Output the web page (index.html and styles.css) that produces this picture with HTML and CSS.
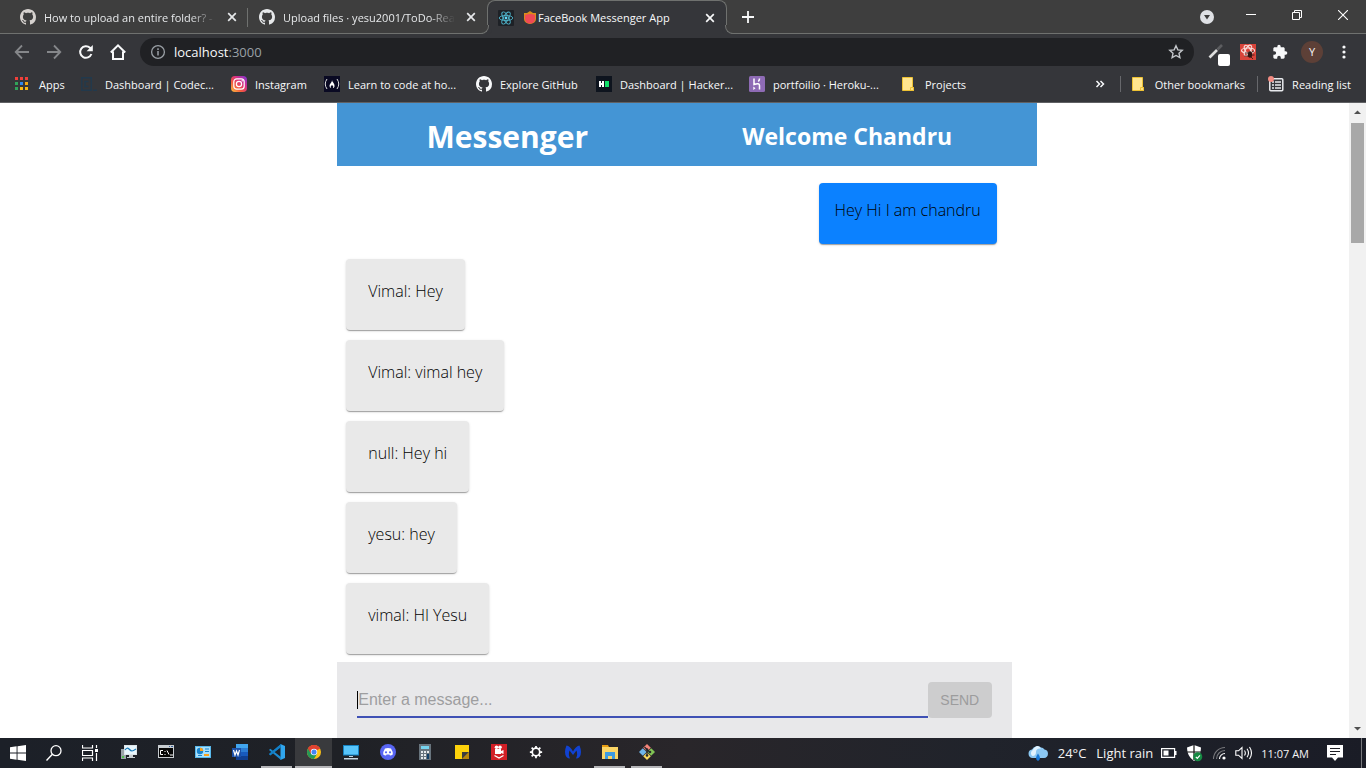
FILE: index.html
```html
<!DOCTYPE html>
<html lang="en">
<head>
<meta charset="utf-8">
<title>FaceBook Messenger App</title>
<link rel="stylesheet" href="styles.css">
</head>
<body>
<svg class="sprite" aria-hidden="true">
  <symbol id="github" viewBox="0 0 16 16"><path fill="currentColor" d="M8 0C3.58 0 0 3.58 0 8c0 3.54 2.29 6.53 5.47 7.59.4.07.55-.17.55-.38 0-.19-.01-.82-.01-1.49-2.01.37-2.53-.49-2.69-.94-.09-.23-.48-.94-.82-1.13-.28-.15-.68-.52-.01-.53.63-.01 1.08.58 1.23.82.72 1.21 1.87.87 2.33.66.07-.52.28-.87.51-1.07-1.78-.2-3.64-.89-3.64-3.95 0-.87.31-1.59.82-2.15-.08-.2-.36-1.02.08-2.12 0 0 .67-.21 2.2.82.64-.18 1.32-.27 2-.27s1.36.09 2 .27c1.53-1.04 2.2-.82 2.2-.82.44 1.1.16 1.92.08 2.12.51.56.82 1.27.82 2.15 0 3.07-1.87 3.75-3.65 3.95.29.25.54.73.54 1.48 0 1.07-.01 1.93-.01 2.2 0 .21.15.46.55.38A8.01 8.01 0 0 0 16 8c0-4.42-3.58-8-8-8z"/></symbol>
  <symbol id="close" viewBox="0 0 10 10"><path d="M1.2 1.2l7.6 7.6M8.8 1.2L1.2 8.8" stroke="currentColor" stroke-width="1.7"/></symbol>
  <symbol id="folder" viewBox="0 0 12 14"><path d="M.5.5h10v10h1v3H.5z" fill="#ffe58f" stroke="#eec233"/><path d="M8.500 10.500h3v3h-3z" fill="#ffe082" stroke="#eec233"/></symbol>
</svg>

<header class="browser">
  <div class="strip">
    <div class="tab">
      <svg class="i16 dim"><use href="#github"/></svg>
      <span class="tab-title fade">How to upload an entire folder? -</span>
      <button class="tab-close" aria-label="Close tab"><svg class="i10"><use href="#close"/></svg></button>
    </div>
    <div class="tab">
      <svg class="i16"><use href="#github"/></svg>
      <span class="tab-title fade">Upload files · yesu2001/ToDo-Rea</span>
      <button class="tab-close" aria-label="Close tab"><svg class="i10"><use href="#close"/></svg></button>
    </div>
    <div class="tab active">
      <svg class="i16" viewBox="0 0 16 16"><rect width="16" height="16" rx="1" fill="#1e2126"/><g fill="none" stroke="#4fb4cb" stroke-width=".9"><ellipse cx="8" cy="8" rx="6.8" ry="2.6"/><ellipse cx="8" cy="8" rx="6.8" ry="2.6" transform="rotate(60 8 8)"/><ellipse cx="8" cy="8" rx="6.8" ry="2.6" transform="rotate(120 8 8)"/></g><circle cx="8" cy="8" r="1.4" fill="#61dafb"/></svg>
      <span class="tab-title"><svg class="badge" viewBox="0 0 12 13"><path d="M0 2h3l3-2 3 2h3v6a6 5 0 0 1-12 0z" fill="#d98c1c"/><path d="M1 4q5-2 10 0v4a5 4.500 0 0 1-10 0z" fill="#ef4a55"/></svg>FaceBook Messenger App</span>
      <button class="tab-close" aria-label="Close tab"><svg class="i10"><use href="#close"/></svg></button>
    </div>
    <button class="new-tab" aria-label="New tab"><svg class="i12" viewBox="0 0 12 12"><path d="M6 0v12M0 6h12" stroke="currentColor" stroke-width="1.8"/></svg></button>
    <div class="window">
      <button class="tab-search" aria-label="Search tabs"><svg class="i14" viewBox="0 0 14 14"><circle cx="7" cy="7" r="7" fill="#dfe1e5"/><path d="M4 5h6L7 9.6z" fill="#3c3c3c"/></svg></button>
      <button aria-label="Minimize"><svg class="i10" viewBox="0 0 10 10"><path d="M0 4.500h10" stroke="#fff"/></svg></button>
      <button aria-label="Restore"><svg class="i10" viewBox="0 0 10 10"><path d="M.5 2.500h7v7h-7zM2.500 2.500v-2h7v7h-2" fill="none" stroke="#fff"/></svg></button>
      <button aria-label="Close window"><svg class="i10" viewBox="0 0 10 10"><path d="M0 0l10 10M10 0L0 10" stroke="#fff" stroke-width="1.1"/></svg></button>
    </div>
  </div>

  <div class="toolbar">
    <nav class="tools">
      <button class="off" aria-label="Back"><svg class="i16" viewBox="0 0 16 16"><path d="M15 8H2M8 1.500L1.700 8 8 14.500" fill="none" stroke="currentColor" stroke-width="1.800"/></svg></button>
      <button class="off" aria-label="Forward"><svg class="i16" viewBox="0 0 16 16"><path d="M1 8h13M8 1.500L14.300 8 8 14.500" fill="none" stroke="currentColor" stroke-width="1.800"/></svg></button>
      <button aria-label="Reload"><svg class="i16" viewBox="0 0 16 16"><path d="M13.400 10A5.800 5.800 0 1 1 12 3.800L13.500 5.300" fill="none" stroke="currentColor" stroke-width="2"/><path d="M14.800 1v6.200H8.600z" fill="currentColor"/></svg></button>
      <button aria-label="Home"><svg class="i18" viewBox="0 0 18 18"><path d="M1.800 9.500L9 2.300l7.200 7.200M4 8.500V16h10V8.500" fill="none" stroke="currentColor" stroke-width="2"/></svg></button>
    </nav>
    <div class="omnibox">
      <svg class="i16 info" viewBox="0 0 16 16"><circle cx="8" cy="8" r="6.400" fill="none" stroke="currentColor" stroke-width="1.300"/><path d="M8 7v4.500M8 4.300v1.600" stroke="currentColor" stroke-width="1.500"/></svg>
      <span class="url">localhost<span class="port">:3000</span></span>
      <button class="star" aria-label="Bookmark"><svg class="i16" viewBox="0 0 16 16"><path d="M8 1.800l1.850 4.050 4.400.5-3.250 3 .9 4.350L8 11.500l-3.900 2.200.9-4.350-3.250-3 4.400-.5z" fill="none" stroke="currentColor" stroke-width="1.400"/></svg></button>
    </div>
    <div class="tools">
      <button aria-label="Color picker"><svg class="i22" viewBox="0 0 22 22"><path d="M4.500 16.500L12 9" stroke="#ddd" stroke-width="2.600"/><path d="M12.500 8.500L17 4" stroke="#5c5d60" stroke-width="2.600"/><rect x="13" y="13" width="12" height="12" rx="2" fill="#fff"/></svg></button>
      <button aria-label="React tools"><svg class="i16" viewBox="0 0 16 16"><rect width="16" height="16" fill="#d9443a"/><g fill="none" stroke="#f8dcda" stroke-width="1.200"><ellipse cx="8" cy="6.500" rx="6.500" ry="2.500"/><ellipse cx="8" cy="6.500" rx="5.800" ry="2.500" transform="rotate(60 8 6.500)"/><ellipse cx="8" cy="6.500" rx="5.800" ry="2.500" transform="rotate(120 8 6.500)"/></g><ellipse cx="10" cy="10.500" rx="2.200" ry="3.200" fill="#301512"/><path d="M5 9h3M4.500 12h4M12 8l2-1M12 11h2.500M11 13l2 2" stroke="#301512" stroke-width=".8"/></svg></button>
      <button aria-label="Extensions"><svg class="i16" viewBox="0 0 24 24"><path fill="currentColor" d="M20.500 11H19V7c0-1.100-.9-2-2-2h-4V3.500a2.500 2.500 0 0 0-5 0V5H4c-1.100 0-2 .9-2 2v3.800h1.500a2.700 2.700 0 0 1 0 5.400H2V20c0 1.100.9 2 2 2h3.800v-1.500a2.700 2.700 0 0 1 5.400 0V22H17c1.100 0 2-.9 2-2v-4h1.500a2.500 2.500 0 0 0 0-5z"/></svg></button>
      <button aria-label="Profile"><span class="avatar">Y</span></button>
      <button aria-label="Menu"><svg class="i16" viewBox="0 0 16 16" fill="currentColor"><circle cx="8" cy="3" r="1.600"/><circle cx="8" cy="8" r="1.600"/><circle cx="8" cy="13" r="1.600"/></svg></button>
    </div>
  </div>

  <nav class="bookmarks">
    <a href="#"><svg class="i16" viewBox="0 0 16 16"><path d="M0 1h3v3H0zM5 1h3v3H5zM10 1h3v3h-3z" fill="#f0403a"/><path d="M0 6h3v3H0z" fill="#31a35a"/><path d="M5 6h3v3H5z" fill="#2f87ee"/><path d="M10 6h3v3h-3z" fill="#f3a712"/><path d="M0 11h3v3H0z" fill="#31a35a"/><path d="M5 11h3v3H5zM10 11h3v3h-3z" fill="#f9b814"/></svg>Apps</a>
    <a href="#"><svg class="i16" viewBox="0 0 16 16"><path d="M.7 1.700h9.600v12.600H.7zM7.500 5.500H4v5h3.500M12 14.300h4" fill="none" stroke="#22394c" stroke-width="1.400"/></svg>Dashboard | Codec...</a>
    <a href="#"><svg class="i16" viewBox="0 0 16 16"><defs><linearGradient id="ig" x1="0" y1="1" x2="1" y2="0"><stop offset="0" stop-color="#fdc33f"/><stop offset=".35" stop-color="#f3583f"/><stop offset=".65" stop-color="#d42e8b"/><stop offset="1" stop-color="#7638d8"/></linearGradient></defs><rect width="16" height="16" rx="4" fill="url(#ig)"/><rect x="2.800" y="2.800" width="10.400" height="10.400" rx="3" fill="none" stroke="#fff" stroke-width="1.200"/><circle cx="8" cy="8" r="2.600" fill="none" stroke="#fff" stroke-width="1.200"/><circle cx="11.200" cy="4.800" r=".7" fill="#fff"/></svg>Instagram</a>
    <a href="#"><svg class="i16" viewBox="0 0 16 16"><rect width="16" height="16" fill="#0a0a23"/><path d="M3 3Q-.5 8 3 13M13 3q3.500 5 0 10" fill="none" stroke="#ddd"/><path d="M8 4c.3 2.500 3 3.500 2.500 6.500Q10 12 9 12q1-2-1-3-2 1-1 3-1.500-.3-1.500-2C5.500 7.500 8 7 8 4z" fill="#fff"/></svg>Learn to code at ho...</a>
    <a href="#"><svg class="i16"><use href="#github"/></svg>Explore GitHub</a>
    <a href="#"><svg class="i16" viewBox="0 0 16 16"><rect width="16" height="16" fill="#0e141e"/><path d="M3 5h2v2h1V5h2v6H6V9H5v2H3z" fill="#fff"/><path d="M9 5h4v6H9z" fill="#12e06a"/></svg>Dashboard | Hacker...</a>
    <a href="#"><svg class="i16" viewBox="0 0 16 16"><rect width="16" height="16" rx="1.500" fill="#8e6bb5"/><path d="M5 2.500v6q5.500-2 5.500 1v4M10.500 2.500q0 1.800-1.200 3" fill="none" stroke="#fff" stroke-width="1.500"/><path d="M4.300 10.500l2.200 1.700-2.200 1.700z" fill="#fff"/></svg>portfoilio · Heroku-...</a>
    <a href="#"><svg class="i16" viewBox="-1 -1 16 16"><use href="#folder" width="12" height="14"/></svg>Projects</a>
    <div class="bookmarks-end">
      <button aria-label="More bookmarks"><svg class="i10" viewBox="0 0 10 10"><path d="M1.500 2l3 3-3 3M5.500 2l3 3-3 3" fill="none" stroke="currentColor" stroke-width="1.500"/></svg></button>
      <a class="ruled" href="#"><svg class="i16" viewBox="-1 -1 16 16"><use href="#folder" width="12" height="14"/></svg>Other bookmarks</a>
      <a class="ruled" href="#"><svg class="i16" viewBox="0 0 16 16"><rect x="1.800" y="2.800" width="13" height="12" rx="1" fill="#35363a" stroke="#e8eaed" stroke-width="1.500"/><path d="M4 6h2M4 9h2M4 12h2M7 6h6M7 9h6M7 12h6" stroke="#e8eaed" stroke-width="1.400"/><circle cx="3" cy="3" r="3" fill="#f28b82"/></svg>Reading list</a>
    </div>
  </nav>
</header>

<div class="viewport">
  <main class="page">
    <div class="chat">
      <div class="banner">
        <h1>Messenger</h1>
        <h2>Welcome Chandru</h2>
      </div>
      <div class="messages">
        <p class="card mine">Hey Hi I am chandru</p>
        <p class="card">Vimal: Hey</p>
        <p class="card">Vimal: vimal hey</p>
        <p class="card">null: Hey hi</p>
        <p class="card">yesu: hey</p>
        <p class="card">vimal: HI Yesu</p>
      </div>
      <form class="composer">
        <div class="field"><input type="text" placeholder="Enter a message..." aria-label="Enter a message"></div>
        <button class="send" type="submit" disabled>SEND</button>
      </form>
    </div>
  </main>
  <div class="scrollbar">
    <svg viewBox="0 0 17 17"><path d="M5 11h7L8.500 7.500z" fill="#505050"/></svg>
    <div class="track"><div class="thumb"></div></div>
    <svg viewBox="0 0 17 17"><path d="M5 6h7L8.500 9.500z" fill="#505050"/></svg>
  </div>
</div>

<footer class="taskbar">
  <div class="system">
    <button aria-label="Start"><svg class="i16" viewBox="0 0 16 16"><path d="M0 2.200l6.600-.9v6.200H0zM7.500 1.200L16 0v7.500H7.500zM0 8.400h6.600v6.300L0 13.800zM7.500 8.400H16V16l-8.500-1.200z" fill="#fff"/></svg></button>
    <button aria-label="Search"><svg class="i16" viewBox="0 0 16 16"><circle cx="10" cy="5.700" r="5" fill="none" stroke="#fff" stroke-width="1.300"/><path d="M6.400 9.300L.5 15.500" stroke="#fff" stroke-width="1.400"/></svg></button>
    <button aria-label="Task view"><svg class="i16" viewBox="0 0 16 16"><path d="M.5 0v3h10V0M.5 5.500h10v5H.5zM.5 16v-3h10v3M14.500 0v3M14.500 8v8" fill="none" stroke="#fff" stroke-width="1.200"/><path d="M13 4h3v3h-3z" fill="#fff"/></svg></button>
  </div>
  <div class="apps">
    <button aria-label="Performance monitor"><svg class="i16" viewBox="0 0 16 16"><path d="M0 5h5v10H0z" fill="#9aa3a8"/><path d="M1 12h2v2H1z" fill="#4fc04b"/><path d="M3 1h13v10H3z" fill="#dde4e8"/><path d="M4 2h11v8H4z" fill="#e8f6fd"/><path d="M4 6q2-3 4-1t3 2 4-2" fill="none" stroke="#1679b8" stroke-width="1.200"/><path d="M8 11h4v2h2v1H6v-1h2z" fill="#c8ced2"/></svg></button>
    <button aria-label="Command prompt"><svg class="i16" viewBox="0 0 16 16"><path d="M0 1h16v13H0z" fill="#c7ccd0"/><path d="M1 4h14v9H1z" fill="#050505"/><path d="M5 6.500H2.500v4H5M7 7v1M7 10v1M9 6.500l2 4M12 11h3" fill="none" stroke="#fff"/><path d="M11 2h1v1h-1zM13 2h2v1h-2z" fill="#39609a"/></svg></button>
    <button aria-label="Control panel"><svg class="i16" viewBox="0 0 16 16"><path d="M0 2h16v12H0z" fill="#58b9ec"/><path d="M1 3h14v10H1z" fill="#a9e0fb"/><circle cx="5" cy="7" r="3.200" fill="#1682cd"/><path d="M5 7V3.800A3.200 3.200 0 0 1 8.200 7z" fill="#f9a11b"/><path d="M10 5h4M10 7.500h4M3 11.500h4" stroke="#1682cd"/><path d="M9 10h5v2H9z" fill="#f9a11b"/></svg></button>
    <button aria-label="Word"><svg class="i16" viewBox="0 0 16 16"><path d="M4 0h12v4H4z" fill="#41a5ee"/><path d="M4 4h12v4H4z" fill="#2b7cd3"/><path d="M4 8h12v4H4z" fill="#185abd"/><path d="M4 12h12v4H4z" fill="#103f91"/><path d="M0 4h9v9H0z" fill="#1b50a8"/><path d="M1.500 6l1.500 5 1.500-4L6 11l1.500-5" fill="none" stroke="#fff" stroke-width="1.200"/></svg></button>
    <button class="running" aria-label="Visual Studio Code"><svg class="i16" viewBox="0 0 16 16"><path d="M11.500 0L16 2v12l-4.500 2z" fill="#30a6ee"/><path d="M1.300 4.700L12 13v3L0 6z" fill="#1c8bd2"/><path d="M1.300 11.300L12 3V0L0 10z" fill="#0c77bd"/><path d="M0 10l1.300 1.500L12 3V0z" fill="#1380c8"/></svg></button>
    <button class="running current" aria-label="Chrome"><svg class="i14" viewBox="0 0 16 16"><circle cx="8" cy="8" r="8" fill="#fbc116"/><path d="M8 8L1.100 4A8 8 0 0 1 14.900 4z" fill="#df4231"/><path d="M1.100 4A8 8 0 0 0 8 16l3.500-6z" fill="#239957"/><path d="M8 4.200h7a8 8 0 0 0-14-.1l3.500 6z" fill="#df4231"/><circle cx="8" cy="8" r="3.700" fill="#fff"/><circle cx="8" cy="8" r="2.900" fill="#4285f4"/></svg></button>
    <button aria-label="This PC"><svg class="i16" viewBox="0 0 16 16"><path d="M0 1h16v10.500H0z" fill="#1583c2"/><path d="M1 2h14v8.500H1z" fill="#58c5fa"/><path d="M6 12h4v1H6zM1 14h14v1.500H1z" fill="#c4d7e2"/></svg></button>
    <button aria-label="Discord"><svg class="i16" viewBox="0 0 16 16"><circle cx="8" cy="8" r="8" fill="#5865f2"/><path d="M5 4.500q3-.8 6 0 2 3 1.800 6-1.600 1.200-2.800 1l-.6-1H6.600l-.6 1q-1.200.2-2.800-1Q3 7.500 5 4.500z" fill="#fff"/><circle cx="6" cy="8.300" r="1.100" fill="#5865f2"/><circle cx="10" cy="8.300" r="1.100" fill="#5865f2"/></svg></button>
    <button aria-label="Calculator"><svg class="i16" viewBox="0 0 16 16"><path d="M2 0h12v16H2z" fill="#68747d"/><path d="M4 2h8v3H4z" fill="#76d4ef"/><path d="M4 7h2v2H4zM7 7h2v2H7zM10 7h2v2h-2zM4 10h2v2H4zM7 10h2v2H7zM4 13h2v2H4zM7 13h2v2H7z" fill="#e4e9ec"/><path d="M10 10h2v5h-2z" fill="#123f67"/></svg></button>
    <button aria-label="Sticky notes"><svg class="i16" viewBox="0 0 16 16"><path d="M1 1h14v7l-7 7H1z" fill="#fdd20b"/><path d="M8 15V8h7z" fill="#3d3d3d"/><path d="M8 15l7-7v7z" fill="#b8860b"/></svg></button>
    <button aria-label="Screen recorder"><svg class="i16" viewBox="0 0 16 16"><path d="M0 0h16v16H0z" fill="#d21f26"/><path d="M4 5h6v5H4zM10 7l2.500-1v4L10 9z" fill="#fff"/><circle cx="5.500" cy="3.300" r="1.800" fill="#fff"/><circle cx="9" cy="3.300" r="1.800" fill="#fff"/><path d="M3.500 11.500L8 14l4.500-2.500" fill="none" stroke="#fff" stroke-width="1.300"/></svg></button>
    <button aria-label="Settings"><svg class="i14" viewBox="0 0 16 16"><circle cx="8" cy="8" r="4.300" fill="none" stroke="#fff" stroke-width="2"/><path d="M8 1v2.500M8 12.500V15M1 8h2.500M12.500 8H15M3 3l1.800 1.800M11.200 11.200L13 13M13 3l-1.800 1.800M4.800 11.200L3 13" stroke="#fff" stroke-width="2"/></svg></button>
    <button aria-label="Malwarebytes"><svg class="i16" viewBox="0 0 16 16"><path d="M1.500 1.500Q5 2 8 7.500 11 2 14.500 1.500q3 7 0 11.500-1.500 1.500-3.500 1.500 2-3.500.5-8L8 11 4.500 6.500Q3 11 5 14.500 3 14.500 1.500 13-1.500 8.500 1.500 1.500z" fill="#1142d1"/></svg></button>
    <button class="running" aria-label="File explorer"><svg class="i16" viewBox="0 0 16 16"><path d="M0 1h6l1 2H0z" fill="#e69c12"/><path d="M0 3h16v12H0z" fill="#fbd565"/><path d="M3 15V8h10v7h-3v-3H6v3z" fill="#3e9be0"/></svg></button>
    <button class="running" aria-label="Git Bash"><svg class="i16" viewBox="0 0 16 16"><path d="M8 0l3.800 3.800L8 7.600 4.200 3.800z" fill="#f48379"/><path d="M3.800 4.200L7.600 8l-3.800 3.800L0 8z" fill="#6fb4e8"/><path d="M12.200 4.200L16 8l-3.800 3.800L8.400 8z" fill="#80c354"/><path d="M8 8.400l3.800 3.800L8 16l-3.800-3.800z" fill="#f9d85c"/><path d="M5.500 3l5 5M8 5.500v6" stroke="#28292d" stroke-width="1.200"/><circle cx="8" cy="5.500" r="1.300" fill="#28292d"/><circle cx="11" cy="8" r="1.300" fill="#28292d"/><circle cx="8" cy="11.500" r="1.300" fill="#28292d"/></svg></button>
  </div>
  <div class="tray">
    <button class="weather" aria-label="Weather"><svg viewBox="0 0 20 16"><path d="M4.500 13A4.300 4.300 0 0 1 4 4.500 6 6 0 0 1 13 2.500a5 5 0 0 1 3.500 2A4.300 4.300 0 0 1 16 13z" fill="#8cc8f3"/><path d="M4.500 11a3.500 3.500 0 0 1 .3-6Q9-2 13 3.500 8 3 8 7t-3.500 4z" fill="#e1f3ff"/><path d="M10 8.500q4 5.500 0 7.500-4-2 0-7.500z" fill="#1878d8"/></svg><span>24°C</span><span>Light rain</span></button>
    <svg class="i16" viewBox="0 0 16 16"><path d="M.6 3.600h13v8.800h-13z" fill="none" stroke="#fff" stroke-width="1.200"/><path d="M2.500 5.500h5v5h-5zM14 6h1.500v4H14z" fill="#fff"/></svg>
    <svg class="i18" viewBox="0 0 18 18"><path d="M9 1l7 2.500q0 9-7 13.500-7-4.500-7-13.500z" fill="#fff"/><path d="M9 1v15M2 8h14" stroke="#111" stroke-width="1.200"/><circle cx="12.800" cy="12.800" r="4.500" fill="#168a43"/><path d="M10.800 12.800l1.500 1.500 2.600-3" fill="none" stroke="#fff" stroke-width="1.200"/></svg>
    <svg class="i16" viewBox="0 0 16 16"><path d="M2.500 14A11.500 11.500 0 0 1 14 2.500M5.500 14A8.500 8.500 0 0 1 14 5.500" fill="none" stroke="#77787c" stroke-width="1.100"/><path d="M8.500 14A5.500 5.500 0 0 1 14 8.500" fill="none" stroke="#fff" stroke-width="1.100"/><circle cx="13" cy="13" r="1.600" fill="#fff"/></svg>
    <svg class="i18" viewBox="0 0 18 18"><path d="M.8 6.800h2.700L7 3.500v11l-3.500-3.300H.8zM9.500 6.500q1.700 2.500 0 5M12 4.800q3 4.200 0 8.400M14.500 3q4 6 0 12" fill="none" stroke="#fff" stroke-width="1.100"/></svg>
    <time>11:07 AM</time>
    <button class="notice" aria-label="Notifications"><svg class="i16" viewBox="0 0 16 16"><path d="M0 0h16v12.500H11L8 16l-3-3.500H0z" fill="#fff"/><path d="M3 3.500h10M3 6.500h10M3 9.500h6" stroke="#202026" stroke-width="1.100"/></svg></button>
  </div>
</footer>
</body>
</html>
```
FILE: styles.css
```css
* { box-sizing: border-box; }

body {
  margin: 0;
  height: 100vh;
  display: flex;
  flex-direction: column;
  overflow: hidden;
  background: #fff;
  font-family: "Open Sans", "Noto Sans", sans-serif;
  font-size: 11px;
}

button {
  display: flex;
  align-items: center;
  justify-content: center;
  padding: 0;
  border: 0;
  background: none;
  color: inherit;
  font: inherit;
}

a { color: inherit; text-decoration: none; }
svg { display: block; flex: none; }

.sprite { width: 0; height: 0; position: absolute; }
.i10 { width: 10px; height: 10px; }
.i12 { width: 12px; height: 12px; }
.i14 { width: 14px; height: 14px; }
.i16 { width: 16px; height: 16px; }
.i18 { width: 18px; height: 18px; }
.i22 { width: 22px; height: 22px; overflow: visible; }

/* Browser frame */
.browser { flex: none; background: #35363a; color: #f8f9fa; }

.strip {
  display: flex;
  height: 34px;
  overflow: hidden;
  background: #3e3e3e;
  box-shadow: inset 0 -1px #6f716f;
}

.tab {
  position: relative;
  display: flex;
  align-items: center;
  gap: 8px;
  width: 239px;
  padding: 0 8px 0 11px;
  color: #e6e8ea;
}
.tab:first-child { width: 248px; padding-left: 20px; }
.tab:first-child::after {
  content: "";
  position: absolute;
  right: 0;
  top: 8px;
  height: 19px;
  border-right: 1px solid #6f716f;
}
.tab-title { flex: 1; min-width: 0; white-space: nowrap; }
.fade { mask-image: linear-gradient(to right, #000 85%, transparent); }
.dim { color: #d6d2cf; }
.tab-close { width: 16px; height: 16px; }

.tab.active {
  width: 240px;
  gap: 10px;
  padding-left: 10px;
  border: 1px solid #6f716f;
  border-bottom: 0;
  border-radius: 8px 8px 0 0;
  background: #35363a;
  color: #f8f9fa;
}
.tab.active .tab-title { display: flex; align-items: center; gap: 2px; }
.tab.active::before,
.tab.active::after {
  content: "";
  position: absolute;
  bottom: 0;
  width: 8px;
  height: 8px;
  background: #3e3e3e;
  border-bottom: 1px solid #6f716f;
}
.tab.active::before {
  left: -8px;
  border-right: 1px solid #6f716f;
  border-bottom-right-radius: 8px;
  box-shadow: 3px 3px #35363a;
}
.tab.active::after {
  right: -8px;
  border-left: 1px solid #6f716f;
  border-bottom-left-radius: 8px;
  box-shadow: -3px 3px #35363a;
}
.badge { width: 12px; height: 13px; }
.new-tab { width: 42px; }

.window { display: flex; margin-left: auto; padding-bottom: 4px; }
.window button { width: 46px; }
.window .tab-search { width: 42px; padding-top: 4px; }

.toolbar { display: flex; align-items: center; gap: 6px; height: 36px; padding: 0 6px; }
.tools { display: flex; }
.tools button { width: 32px; height: 32px; }
.off { color: #85878a; }

.omnibox {
  flex: 1;
  display: flex;
  align-items: center;
  gap: 8px;
  height: 28px;
  padding: 0 10px;
  border-radius: 14px;
  background: #202124;
  font-size: 13px;
}
.url { flex: 1; }
.info, .port { color: #9aa0a6; }
.star { color: #c4c7cb; }

.avatar {
  width: 22px;
  height: 22px;
  border-radius: 50%;
  background: #5d4037;
  line-height: 22px;
}

.bookmarks {
  display: grid;
  grid-template-columns: 66px 150px 93px 152px 120px 153px 152px 1fr auto;
  height: 33px;
  padding: 0 15px 4px 15px;
  border-bottom: 1px solid #606164;
  white-space: nowrap;
}
.bookmarks a { display: flex; align-items: center; gap: 8px; }
.bookmarks-end { display: flex; align-items: center; gap: 12px; }
.bookmarks-end button { width: 16px; height: 16px; }
.ruled { height: 16px; padding-left: 10px; border-left: 1px solid #67686c; }

/* Chat page */
.viewport { flex: 1; min-height: 0; display: flex; }
.page { flex: 1; display: flex; justify-content: center; overflow: hidden; }
.chat { width: 50%; display: flex; flex-direction: column; }

.banner {
  display: grid;
  grid-template-columns: 340px 340px;
  align-items: center;
  width: 700px;
  height: 63px;
  flex: none;
  background: #4495d5;
  color: #fff;
  text-align: center;
}
.banner h1, .banner h2 { margin: 0; padding-top: 3px; }
.banner h1 { font-size: 30px; }
.banner h2 { font-size: 23px; }

.messages {
  flex: 1;
  min-height: 0;
  display: flex;
  flex-direction: column;
  align-items: flex-start;
  gap: 10px;
  overflow: hidden;
  padding: 17px 15px 0 9px;
}
.card {
  flex: none;
  margin: 0;
  padding: 21px 22px 28px;
  border-radius: 4px;
  background: #e9e9e9;
  box-shadow: 0 2px 1px -1px rgba(0, 0, 0, .2), 0 1px 1px rgba(0, 0, 0, .14), 0 1px 3px rgba(0, 0, 0, .12);
  color: #000;
  font-size: 16px;
  font-weight: 300;
  line-height: 22px;
}
.card.mine {
  align-self: flex-end;
  margin-bottom: 5px;
  padding: 16px 16px 23px;
  background: #0b81ff;
}

.composer {
  flex: none;
  display: flex;
  height: 76px;
  padding: 20px;
  background: #e8e8ea;
  font-family: "Liberation Sans", Arial, sans-serif;
}
.field { flex: 1; padding-top: 9px; border-bottom: 2px solid #3f51b5; }
.field input {
  display: block;
  width: 100%;
  height: 18px;
  padding: 0;
  border: 0;
  border-left: 1px solid #000;
  outline: 0;
  background: none;
  font: 16px "Liberation Sans", Arial, sans-serif;
}
.field input::placeholder { color: #9e9ea0; }
.send {
  width: 64px;
  height: 36px;
  border-radius: 4px;
  background: #cdcdce;
  color: #9c9c9d;
  font-size: 14px;
}

.scrollbar { display: flex; flex-direction: column; width: 17px; background: #f1f1f1; }
.scrollbar svg { width: 17px; height: 17px; }
.track { flex: 1; padding: 3px 2px 0; }
.thumb { height: 20%; background: #a8a8a8; }

/* Desktop taskbar */
.taskbar {
  flex: none;
  display: flex;
  height: 30px;
  background: linear-gradient(90deg, #1c2028, #1f2126 25%, #29262a 50%, #20232b 72%, #1a1c26);
  color: #f4f4f4;
}
.system, .apps { display: flex; }
.system { padding-right: 2px; }
.system button { width: 36px; }
.apps button { width: 37px; padding-bottom: 1px; border-bottom: 2px solid transparent; }
.apps .running { border-image: linear-gradient(90deg, transparent 12%, #b5b5b8 12%, #b5b5b8 88%, transparent 88%) 2; }
.apps .current { background: #393a3d; border-image: none; border-bottom-color: #b5b5b8; }

.tray { display: flex; align-items: center; gap: 8px; margin-left: auto; padding-right: 4px; }
.weather { gap: 10px; font-size: 13px; }
.weather svg { width: 20px; height: 16px; }
.notice { width: 36px; height: 30px; }
.tray::after { content: ""; height: 30px; border-right: 1px solid #77787c; }
```
